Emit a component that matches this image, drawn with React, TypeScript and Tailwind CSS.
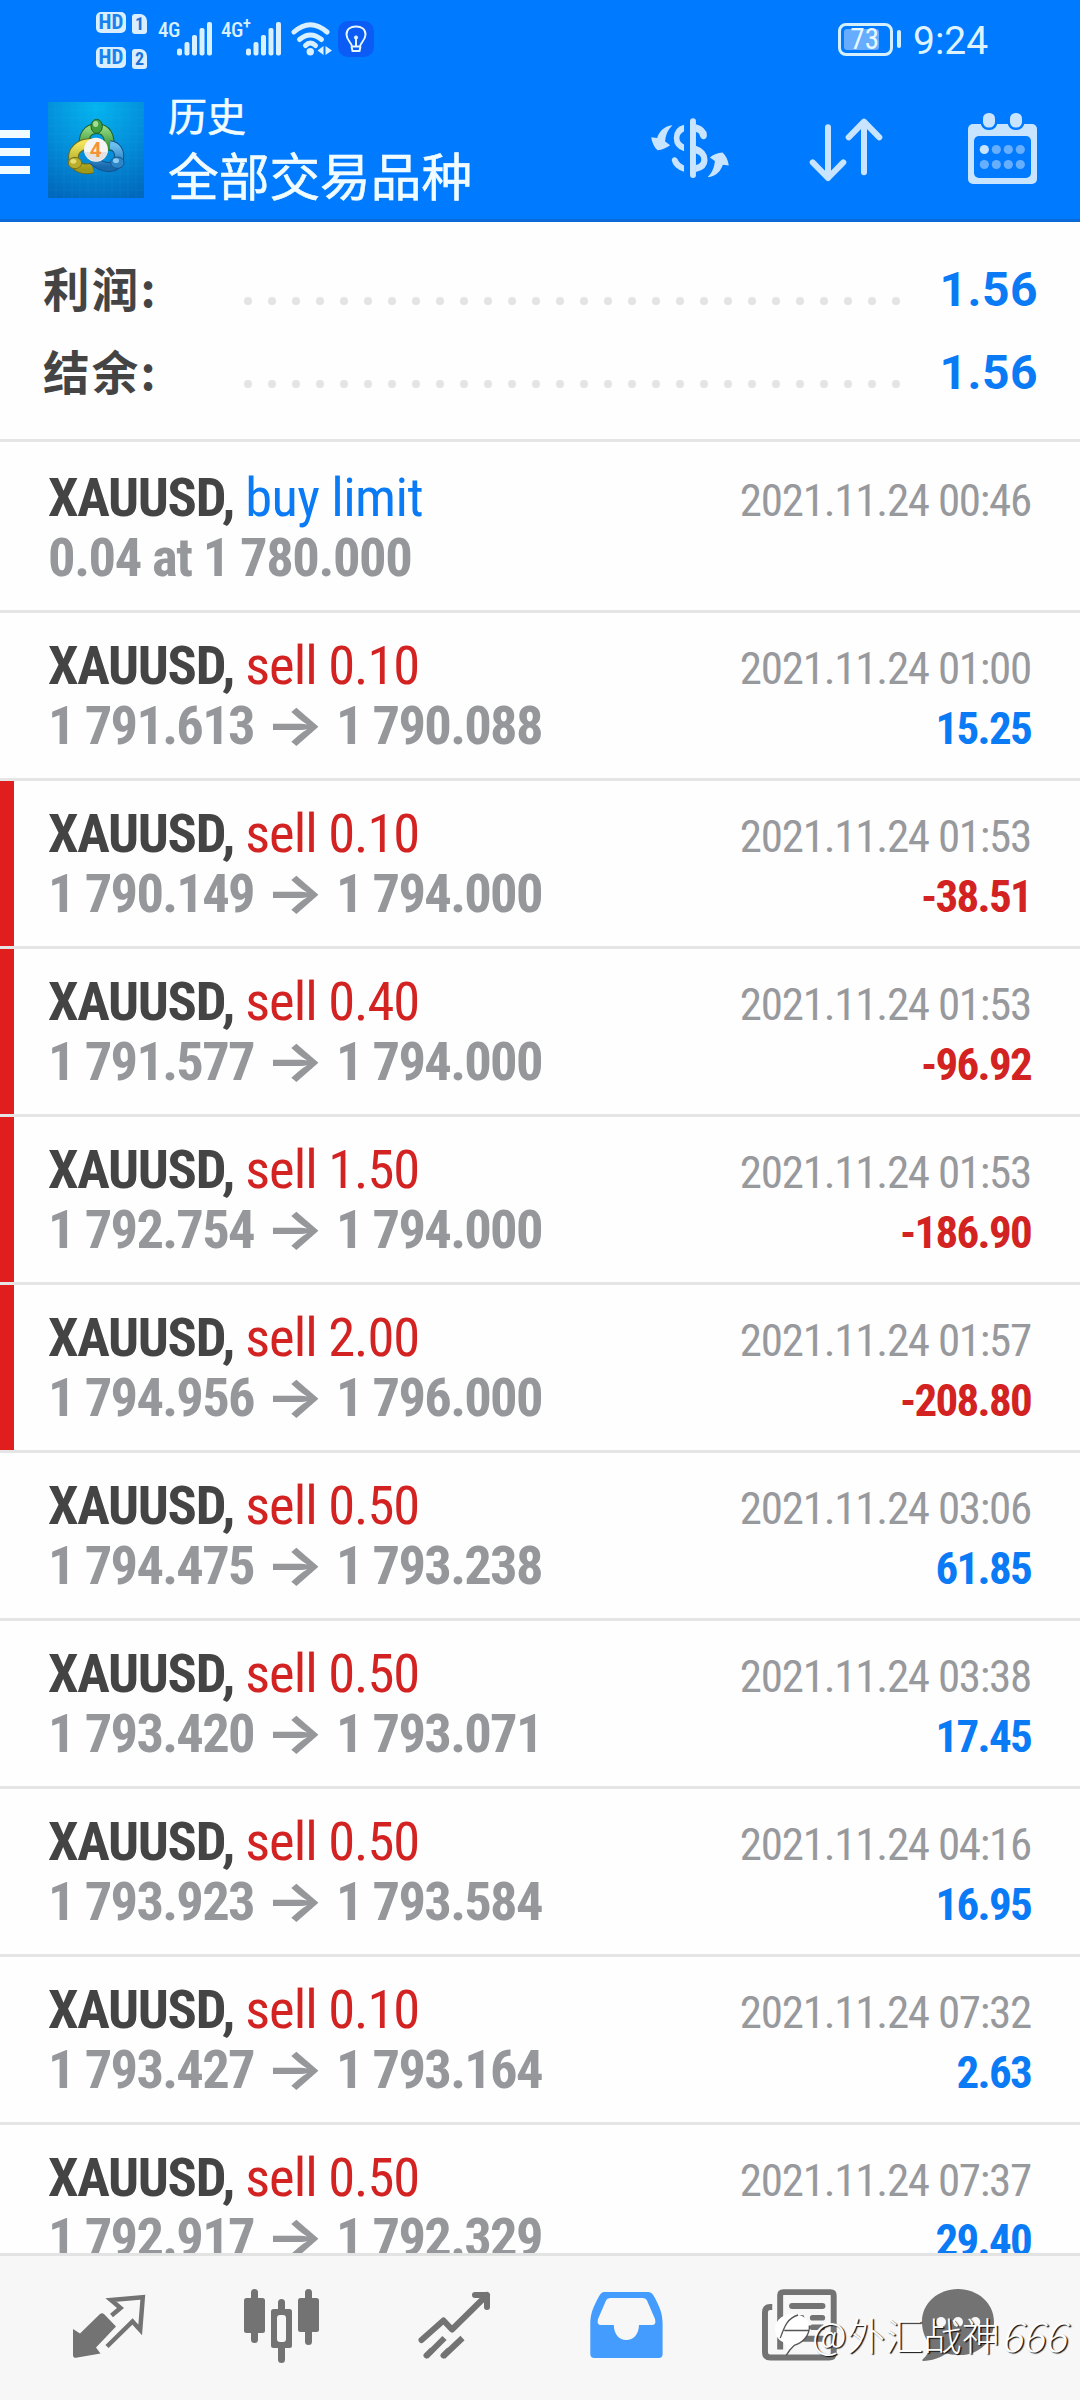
import type { ReactNode } from "react";
import clsx from "clsx";

interface Deal {
  side: "buy" | "sell";
  action: string;
  from: string;
  to?: string;
  time: string;
  profit?: string;
  stopped?: boolean;
}

const deals: Deal[] = [
  { side: "buy", action: "buy limit", from: "0.04 at 1 780.000", time: "2021.11.24 00:46" },
  { side: "sell", action: "sell 0.10", from: "1 791.613", to: "1 790.088", time: "2021.11.24 01:00", profit: "15.25" },
  { side: "sell", action: "sell 0.10", from: "1 790.149", to: "1 794.000", time: "2021.11.24 01:53", profit: "-38.51", stopped: true },
  { side: "sell", action: "sell 0.40", from: "1 791.577", to: "1 794.000", time: "2021.11.24 01:53", profit: "-96.92", stopped: true },
  { side: "sell", action: "sell 1.50", from: "1 792.754", to: "1 794.000", time: "2021.11.24 01:53", profit: "-186.90", stopped: true },
  { side: "sell", action: "sell 2.00", from: "1 794.956", to: "1 796.000", time: "2021.11.24 01:57", profit: "-208.80", stopped: true },
  { side: "sell", action: "sell 0.50", from: "1 794.475", to: "1 793.238", time: "2021.11.24 03:06", profit: "61.85" },
  { side: "sell", action: "sell 0.50", from: "1 793.420", to: "1 793.071", time: "2021.11.24 03:38", profit: "17.45" },
  { side: "sell", action: "sell 0.50", from: "1 793.923", to: "1 793.584", time: "2021.11.24 04:16", profit: "16.95" },
  { side: "sell", action: "sell 0.10", from: "1 793.427", to: "1 793.164", time: "2021.11.24 07:32", profit: "2.63" },
  { side: "sell", action: "sell 0.50", from: "1 792.917", to: "1 792.329", time: "2021.11.24 07:37", profit: "29.40" },
];

const summary = [
  { label: "利润:", value: "1.56" },
  { label: "结余:", value: "1.56" },
];

function HdBadge({ sim }: { sim: string }) {
  return (
    <div className="flex items-center gap-[6px]">
      <span className="flex h-[21px] w-[30px] items-center justify-center rounded-[5px] bg-[#d9efff] text-[21px] leading-none font-bold text-[#1a82ec] [font-stretch:75%]">
        HD
      </span>
      <span className="mt-[3px] flex h-5 w-[15px] items-center justify-center rounded-[3px] rounded-tr-[7px] bg-[#d9efff] text-[18px] leading-none font-bold text-[#1a72d8] [font-stretch:75%]">
        {sim}
      </span>
    </div>
  );
}

function SignalBars() {
  return (
    <svg viewBox="0 0 35 34" className="h-[34px] w-[35px] shrink-0" fill="#d9f0ff">
      <rect x="0" y="26.5" width="5" height="7" rx="2" />
      <rect x="7.5" y="20" width="5" height="13.5" rx="2" />
      <rect x="15" y="13" width="5" height="20.5" rx="2" />
      <rect x="22.5" y="6" width="5" height="27.5" rx="2" />
      <rect x="30" y="0" width="5" height="33.5" rx="2" />
    </svg>
  );
}

function StatusBar() {
  return (
    <div className="flex h-20 pl-24 pr-24 font-['Roboto',sans-serif]">
      <div className="flex flex-col gap-[12px] pt-[11px]">
        <HdBadge sim="1" />
        <HdBadge sim="2" />
      </div>
      <div className="ml-[11px] mt-[22px] flex">
        <span className="w-[19px] text-[21px] leading-[16px] font-medium tracking-[-0.5px] text-[#d9f0ff] [font-stretch:75%]">4G</span>
        <SignalBars />
      </div>
      <div className="ml-[9px] mt-[22px] flex">
        <span className="w-[25px] text-[21px] leading-[16px] font-medium whitespace-nowrap tracking-[-0.5px] text-[#d9f0ff] [font-stretch:75%]">
          4G<sup className="text-[17px] leading-none">+</sup>
        </span>
        <SignalBars />
      </div>
      <svg viewBox="290 20 44 37" className="ml-[9px] mt-5 h-[37px] w-11" fill="none">
        <g stroke="#d9f0ff" strokeWidth="5" strokeLinecap="round">
          <path d="M294 32Q310.3 17.5 327 32" />
          <path d="M299.5 39.5Q310.3 30.5 321.5 39.5" />
          <path d="M305.5 45.5Q310.3 40.5 315.5 45.5" />
        </g>
        <circle cx="310.3" cy="51.7" r="3.7" fill="#d9f0ff" />
        <path d="M323.5 46V55L317.5 50.5ZM325.5 46V55L332 50.5Z" fill="#d9f0ff" />
      </svg>
      <div className="ml-1 mt-[21px] flex h-9 w-9 items-center justify-center rounded-[10px] bg-[#0a5cf5]">
        <svg viewBox="0 0 24 30" className="h-[30px] w-6" fill="none" stroke="#e6f6ff" strokeWidth="2">
          <path d="M8 22.5C7.5 18.5 2.5 16 2.5 10.5C2.5 5.5 6.5 2.5 12 2.5S21.5 5.5 21.5 10.5C21.5 16 16.5 18.5 16 22.5Z" />
          <path d="M7.5 22.5L8.5 27H15.5L16.5 22.5M12 22V13" />
          <circle cx="12" cy="13.5" r="1.6" fill="#e6f6ff" strokeWidth="1" />
        </svg>
      </div>
      <div className="ml-auto flex">
        <div className="mt-[23px] flex h-[33px] w-[55px] items-center rounded-[8px] border-3 border-[#d4f0ff] px-[3px]">
          <span className="flex h-[21px] w-[35px] items-center justify-end rounded-[3px] bg-[#66acff] text-[29px] leading-none text-[#e8f9ff] [font-stretch:85%]">
            73
          </span>
        </div>
        <span className="ml-1 mt-[30px] h-[18px] w-1 rounded-full bg-[#d4f0ff]" />
        <span className="ml-[12px] mt-[18px] w-[71px] text-right text-[39px] leading-[46px] whitespace-nowrap text-[#dff3ff] [font-stretch:90%]">
          9:24
        </span>
      </div>
    </div>
  );
}

function AppLogo() {
  return (
    <svg viewBox="0 0 288 288" className="ml-[18px] size-24">
      <defs>
        <radialGradient id="logoBg" cx="0.5" cy="0.05" r="1">
          <stop offset="0" stopColor="#04b4ef" />
          <stop offset="0.5" stopColor="#0390db" />
          <stop offset="1" stopColor="#0169bd" />
        </radialGradient>
        <linearGradient id="logoGreen" x1="0" y1="0" x2="0" y2="1">
          <stop offset="0" stopColor="#8fd67c" />
          <stop offset="1" stopColor="#22852d" />
        </linearGradient>
        <linearGradient id="logoYellow" x1="0" y1="0" x2="0" y2="1">
          <stop offset="0" stopColor="#f1e45c" />
          <stop offset="1" stopColor="#a09a1a" />
        </linearGradient>
        <linearGradient id="logoBlue" x1="0" y1="0" x2="0" y2="1">
          <stop offset="0" stopColor="#6cc0f0" />
          <stop offset="1" stopColor="#1769ad" />
        </linearGradient>
      </defs>
      <rect width="288" height="288" fill="url(#logoBg)" />
      <path
        d="M24 0V288M48 0V288M72 0V288M96 0V288M120 0V288M144 0V288M168 0V288M192 0V288M216 0V288M240 0V288M264 0V288M0 24H288M0 48H288M0 72H288M0 96H288M0 120H288M0 144H288M0 168H288M0 192H288M0 216H288M0 240H288M0 264H288"
        stroke="#5fd0ff"
        strokeOpacity="0.12"
        strokeWidth="1.5"
      />
      <g fill="none">
        <path d="M110 140C102 100 120 80 146 80S190 100 182 146" stroke="#205f2a" strokeWidth="32" />
        <path d="M110 140C102 100 120 80 146 80S190 100 182 146" stroke="url(#logoGreen)" strokeWidth="26" />
        <path d="M134 198C106 206 82 196 77 172S94 124 130 124" stroke="#6b6a1c" strokeWidth="32" />
        <path d="M134 198C106 206 82 196 77 172S94 124 130 124" stroke="url(#logoYellow)" strokeWidth="26" />
        <path d="M186 130C206 132 218 150 212 174S172 206 134 174" stroke="#12528b" strokeWidth="30" />
        <path d="M186 130C206 132 218 150 212 174S172 206 134 174" stroke="url(#logoBlue)" strokeWidth="24" />
      </g>
      <ellipse cx="146" cy="73" rx="17" ry="21" fill="#3f9f3f" stroke="#205f2a" strokeWidth="3" />
      <ellipse cx="143" cy="66" rx="8" ry="9" fill="#a5dc94" />
      <ellipse cx="81" cy="183" rx="20" ry="17" fill="#b9ad2c" stroke="#75731d" strokeWidth="3" />
      <ellipse cx="76" cy="178" rx="9" ry="7" fill="#e8dd72" />
      <ellipse cx="208" cy="182" rx="20" ry="17" fill="#2e86c8" stroke="#15578f" strokeWidth="3" />
      <ellipse cx="204" cy="176" rx="9" ry="7" fill="#8dcbf0" />
      <circle cx="144" cy="143" r="36" fill="#f7f5f4" />
      <path d="M109 150A36 36 0 0 0 179 150Z" fill="#e3e1e2" />
      <text x="143" y="165" textAnchor="middle" fontFamily="Roboto" fontWeight="700" fontSize="62" fill="#f59338">
        4
      </text>
    </svg>
  );
}

function Header() {
  return (
    <header className="flex h-[222px] flex-col border-b-3 border-[#0a6bd8] bg-[#007aff]">
      <StatusBar />
      <div className="flex h-[139px] items-center pr-[43px]">
        <div className="mt-[5px] flex w-[30px] flex-col gap-[10px]">
          <span className="h-2 bg-[#f0fbff]" />
          <span className="h-2 bg-[#f0fbff]" />
          <span className="h-2 bg-[#f0fbff]" />
        </div>
        <AppLogo />
        <div className="-mt-[2px] ml-6 flex flex-col font-['Noto_Sans_CJK_SC',sans-serif] text-[#f0fcff] [-webkit-text-stroke:0.6px_#f0fcff]">
          <span className="text-[39px] leading-[52px]">历史</span>
          <span className="text-[50.7px] leading-[69px]">全部交易品种</span>
        </div>
        <svg viewBox="33 38 234 181" className="-mt-[3px] ml-auto h-[60px] w-[78px]" fill="#c9e4ff">
          <rect x="150" y="39" width="18" height="180" rx="9" />
          <path d="M132 58Q101 66 101 98Q101 128 132 138V118Q118 110 118 98Q118 86 132 78Z" />
          <path d="M95 166C94 156 106 152 112 162Q118 176 132 181V200Q100 190 95 166Z" />
          <path d="M168 57Q200 66 201 90Q200 103 189 102Q182 100 180 92Q178 82 168 80Z" />
          <path d="M168 122Q203 134 203 165Q203 194 168 201V180Q184 176 184 163Q184 150 168 145Z" />
          <path d="M97 60C70 62 56 82 51 98L33 96C35 112 42 126 52 135C66 134 80 128 90 120L75 109C76 92 82 75 97 60Z" />
          <path
            d="M97 60C70 62 56 82 51 98L33 96C35 112 42 126 52 135C66 134 80 128 90 120L75 109C76 92 82 75 97 60Z"
            transform="rotate(180 150 138.5)"
          />
        </svg>
        <svg
          viewBox="508 38 220 192"
          className="ml-[80px] h-16 w-[74px]"
          fill="none"
          stroke="#c9e4ff"
          strokeWidth="18"
          strokeLinecap="round"
          strokeLinejoin="round"
        >
          <path d="M564 66V218M518 171L564 218L610 171M672 201V49M626 96L672 49L718 96" />
        </svg>
        <svg viewBox="0 0 69 71" className="-mt-[2px] ml-[85px] h-[71px] w-[69px]">
          <rect y="11" width="69" height="60" rx="5" fill="#c9e4ff" />
          <rect x="6" y="23" width="57" height="42" rx="5" fill="#007aff" />
          <g fill="#c9e4ff" stroke="#007aff" strokeWidth="5" paintOrder="stroke">
            <rect x="15" y="0" width="12" height="14.5" rx="5.5" />
            <rect x="42" y="0" width="12" height="14.5" rx="5.5" />
          </g>
          <g fill="#66afff">
            <circle cx="16.3" cy="36.5" r="4.6" fill="#c9e4ff" />
            <circle cx="28.3" cy="36.5" r="4.6" />
            <circle cx="40.3" cy="36.5" r="4.6" />
            <circle cx="52.3" cy="36.5" r="4.6" />
            <circle cx="16.3" cy="51.5" r="4.6" />
            <circle cx="28.3" cy="51.5" r="4.6" />
            <circle cx="40.3" cy="51.5" r="4.6" />
            <circle cx="52.3" cy="51.5" r="4.6" />
          </g>
        </svg>
      </div>
    </header>
  );
}

function Summary() {
  return (
    <section className="flex h-[220px] flex-col border-b-3 border-[#e5e5e5] pt-[24px]">
      {summary.map((row) => (
        <div key={row.label} className="flex h-[83px] items-center pl-[43px] pr-[42px]">
          <span className="-mt-[3px] w-[201px] font-['Noto_Sans_CJK_SC',sans-serif] text-[46.5px] leading-[83px] font-bold tracking-[2.2px] text-[#444]">
            {row.label}
          </span>
          <span className="mt-[27px] flex gap-4">
            {Array.from({ length: 28 }, (_, i) => (
              <span key={i} className="size-2 rounded-full bg-[#e4e4e4]" />
            ))}
          </span>
          <span className="mt-[3px] ml-auto font-['Roboto',sans-serif] text-[48px] leading-[83px] font-bold tracking-[0.5px] text-[#0a7bf5]">
            {row.value}
          </span>
        </div>
      ))}
    </section>
  );
}

function DealRow({ deal }: { deal: Deal }) {
  return (
    <li className="relative h-[168px] border-b-3 border-[#e5e5e5] pl-12 pr-[49px] pt-[22px] leading-[60px]">
      {deal.stopped && <span className="absolute inset-y-0 left-0 w-[14px] bg-[#e01e1e]" />}
      <div className="flex h-[60px] items-baseline justify-between">
        <span className="text-[54.5px] tracking-[-1.3px]">
          <b className="text-[#444]">XAUUSD,</b>{" "}
          <span className={deal.side === "buy" ? "tracking-[-0.6px] text-[#0a7bf5]" : "tracking-[-1px] text-[#d32222]"}>
            {deal.action}
          </span>
        </span>
        <span className="text-[45px] tracking-[-1.25px] text-[#98999c]">{deal.time}</span>
      </div>
      <div className="flex h-[60px] items-baseline justify-between font-bold">
        <span className={clsx("flex items-baseline text-[54.5px] text-[#96979b]", deal.to ? "tracking-[-1.7px]" : "tracking-[-1.4px]")}>
          <span>{deal.from}</span>
          {deal.to && (
            <>
              <span className="flex w-[82px] scale-x-115 justify-center font-['Inter',sans-serif] text-[54px] leading-[50px] tracking-normal">
                →
              </span>
              <span>{deal.to}</span>
            </>
          )}
        </span>
        <span
          className={clsx(
            "text-[45px] tracking-[-1.7px]",
            deal.profit?.startsWith("-") ? "text-[#d32222]" : "text-[#0a7bf5]",
          )}
        >
          {deal.profit}
        </span>
      </div>
    </li>
  );
}

function NavItem({ label, children }: { label: string; children: ReactNode }) {
  return (
    <button aria-label={label} className="flex w-[172.5px] justify-center last:w-[144px]">
      {children}
    </button>
  );
}

function Watermark() {
  return (
    <div className="absolute top-[53px] right-[14px] flex items-center font-['Noto_Sans_CJK_SC',sans-serif] font-light text-white [text-shadow:1.5px_1px_1px_#111]">
      <svg viewBox="70 150 118 134" className="h-[45px] w-[39px]" fill="none">
        <path d="M110 280C114 262 112 250 100 240C70 225 68 185 95 165C125 145 165 155 180 185C184 215 160 245 135 252Q122 258 110 280Z" fill="#fff" />
        <path d="M92 228C104 195 112 168 146 158M104 205H178M180 190C182 220 160 242 134 250Q120 262 110 280" stroke="#555" strokeWidth="4" />
      </svg>
      <span className="text-[38px] leading-[50px] tracking-[0.3px]">@外汇战神</span>
      <span className="text-[41px] leading-[50px] italic">666</span>
    </div>
  );
}

function BottomNav() {
  return (
    <nav className="relative h-[147px] shrink-0 border-t-3 border-[#e3e3e3] bg-[#f7f7f7]">
      <div className="flex items-start pl-[23px]">
        <NavItem label="quotes">
          <svg viewBox="74 194 73 65" className="mt-[38px] h-[65px] w-[73px]">
            <path
              d="M112.5 215.5L121.5 208L112 200L143.8 197.2L141.2 230L133.5 221.5L108 246.5"
              fill="none"
              stroke="#737373"
              strokeWidth="4.5"
            />
            <path d="M74 229L81 233.5L101 214Q103 212.5 105 214L117 226.5L97 247.5L101.5 253.5L77 257.8Q74 258 74 255Z" fill="#737373" />
          </svg>
        </NavItem>
        <NavItem label="charts">
          <svg viewBox="244 189 75 74" className="mt-[33px] h-[74px] w-[75px]" fill="#737373">
            <rect x="251" y="189" width="7" height="54" rx="3.5" />
            <rect x="244" y="198" width="21" height="35" rx="2.5" />
            <rect x="278" y="199" width="7" height="64" rx="3.5" />
            <rect x="271" y="209" width="21" height="39" rx="2.5" />
            <rect x="277" y="215" width="9" height="27" rx="3" fill="#f7f7f7" />
            <rect x="305" y="189" width="7" height="56" rx="3.5" />
            <rect x="298" y="198" width="21" height="34" rx="2.5" />
          </svg>
        </NavItem>
        <NavItem label="trade">
          <svg viewBox="417 191 73 68" className="mt-[35px] h-[68px] w-[73px]" fill="none" stroke="#737373" strokeWidth="6">
            <path d="M420.5 240L442.5 220.5L451 229.5L486 195M474 195H486V207" strokeLinecap="round" strokeLinejoin="round" />
            <path d="M425 256.5L443.5 238M442 256.5L461.5 238" />
            <path d="M425.5 255.5L430 251M442.5 255.5L447 251" strokeLinecap="round" />
          </svg>
        </NavItem>
        <NavItem label="history">
          <svg viewBox="50 192 73 66" className="mt-[36px] h-[66px] w-[73px]" fill="#449cff" fillRule="evenodd">
            <path d="M64 192H108Q111.5 192 113.5 195.5C120 207 122.6 214 122.6 224V254Q122.6 258 118.5 258H54.5Q50.3 258 50.3 254V224C50.3 214 53 207 59.5 195.5Q61.5 192 64 192ZM70 198Q67 198 66 200.5L58 219Q56.5 225 61 225H73.8C74 234 79 240 86.3 240S98.8 234 99 225H112Q116.5 225 115 219L107 200.5Q106 198 103 198Z" />
          </svg>
        </NavItem>
        <NavItem label="news">
          <svg viewBox="37 57 227 217" className="mt-[33px] h-[72px] w-[75px]" fill="none">
            <path
              d="M68 111H62Q46 111 46 128V248Q46 264 62 264H240Q254 264 254 250V76Q254 66 244 66H102Q92 66 92 76V240"
              stroke="#737373"
              strokeWidth="18"
            />
            <g fill="#737373">
              <rect x="119" y="99" width="110" height="18" rx="9" />
              <rect x="119" y="135" width="46" height="46" rx="6" />
              <rect x="182" y="135" width="46" height="17" rx="8" />
              <rect x="182" y="164" width="46" height="17" rx="8" />
              <rect x="119" y="198" width="110" height="18" rx="9" />
            </g>
          </svg>
        </NavItem>
        <NavItem label="messages">
          <svg viewBox="516 57 216 216" className="mt-[33px] size-[72px]">
            <path
              d="M624 57C684 57 732 100 732 155S690 255 630 255Q600 255 590 250C570 265 545 272 520 273Q514 272 519 267C530 258 538 245 540 222C525 205 516 182 516 155C516 100 564 57 624 57Z"
              fill="#737373"
            />
            <g fill="#f7f7f7">
              <circle cx="573" cy="156" r="15" />
              <circle cx="624" cy="156" r="15" />
              <circle cx="676" cy="156" r="15" />
            </g>
          </svg>
        </NavItem>
      </div>
      <Watermark />
    </nav>
  );
}

export default function App() {
  return (
    <div className="flex h-[2400px] w-[1080px] flex-col overflow-hidden bg-[#fefefe]">
      <Header />
      <Summary />
      <ul className="min-h-0 flex-1 overflow-hidden pt-[3px] font-['Roboto',sans-serif] [font-stretch:75%]">
        {deals.map((deal, i) => (
          <DealRow key={i} deal={deal} />
        ))}
      </ul>
      <BottomNav />
    </div>
  );
}
